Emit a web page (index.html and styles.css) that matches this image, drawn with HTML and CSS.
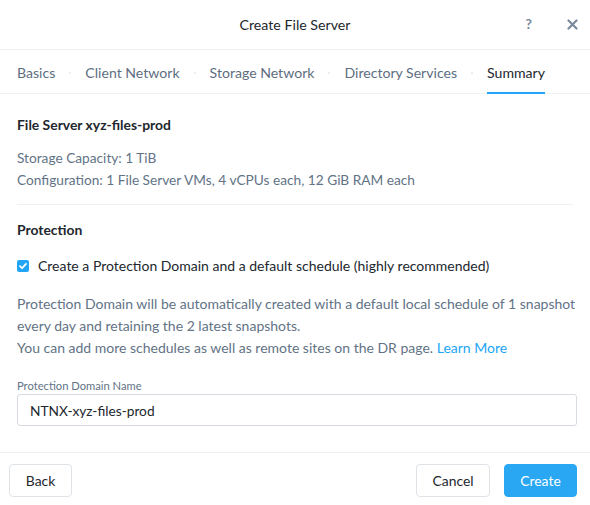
FILE: index.html
```html
<!DOCTYPE html>
<html>
<head>
<meta charset="utf-8">
<link rel="stylesheet" href="styles.css">
</head>
<body>
<div class="modal">
  <div class="header">
    <div class="title">Create File Server</div>
    <div class="header-icons">
      <span class="help">?</span>
      <svg class="close" width="11" height="11" viewBox="0 0 11 11"><path d="M1.5 1.5L9.5 9.5M9.5 1.5L1.5 9.5" stroke="#7b8a9b" stroke-width="2.2" stroke-linecap="round"/></svg>
    </div>
  </div>
  <div class="tabs">
    <span class="tab">Basics</span><span class="dot"></span>
    <span class="tab">Client Network</span><span class="dot"></span>
    <span class="tab">Storage Network</span><span class="dot"></span>
    <span class="tab">Directory Services</span><span class="dot"></span>
    <span class="tab active">Summary</span>
  </div>
  <div class="body">
    <div class="section">
      <div class="heading">File Server xyz-files-prod</div>
      <div class="muted">Storage Capacity: 1 TiB</div>
      <div class="muted">Configuration: 1 File Server VMs, 4 vCPUs each, 12 GiB RAM each</div>
    </div>
    <div class="divider"></div>
    <div class="heading">Protection</div>
    <label class="check">
      <span class="box"><svg width="12" height="12" viewBox="0 0 12 12"><path d="M3 6.2L5.1 8.2L9 3.9" fill="none" stroke="#fff" stroke-width="1.8" stroke-linecap="round" stroke-linejoin="round"/></svg></span>
      <span>Create a Protection Domain and a default schedule (highly recommended)</span>
    </label>
    <p class="desc">Protection Domain will be automatically created with a default local schedule of 1 snapshot every day and retaining the 2 latest snapshots.<br>You can add more schedules as well as remote sites on the DR page. <a class="link">Learn More</a></p>
    <div class="field">
      <div class="field-label">Protection Domain Name</div>
      <div class="input">NTNX-xyz-files-prod</div>
    </div>
  </div>
  <div class="footer">
    <button class="btn back">Back</button>
    <div class="right">
      <button class="btn cancel">Cancel</button>
      <button class="btn primary">Create</button>
    </div>
  </div>
</div>
</body>
</html>
```
FILE: styles.css
```css
* { box-sizing: border-box; }
html, body { margin: 0; padding: 0; background: #fff; }
body {
  font-family: Lato, "Open Sans", sans-serif;
  font-size: 13.7px;
  color: #22272e;
  width: 590px;
  height: 505px;
  overflow: hidden;
}
.modal { width: 590px; height: 505px; display: flex; flex-direction: column; }
.header {
  height: 50px;
  border-bottom: 1px solid #eef0f2;
  display: flex;
  align-items: center;
  justify-content: center;
  position: relative;
}
.title { font-size: 14.2px; color: #22272e; }
.header-icons {
  position: absolute;
  right: 12px;
  top: 16px;
  display: flex;
  align-items: center;
  gap: 35px;
}
.help { color: #7b8a9b; font-weight: 700; font-size: 14px; line-height: 16px; }
.close { display: block; margin-top: 1px; }
.tabs {
  height: 44px;
  border-bottom: 1px solid #eef0f2;
  display: flex;
  align-items: stretch;
  padding-left: 17px;
}
.tab {
  display: flex;
  align-items: center;
  color: #5e6e80;
  font-size: 14.1px;
  padding-top: 3px;
  border-bottom: 2px solid transparent;
  margin-bottom: -1px;
}
.tab.active { color: #22272e; border-bottom-color: #22a5f7; }
.dot {
  width: 2px; height: 2px; background: #e3e6ea;
  align-self: center;
  margin: 3px 14px 0;
  border-radius: 1px;
}
.body { flex: 1; padding: 22px 13px 0 17px; }
.heading { font-weight: 700; color: #22272e; font-size: 13.9px; line-height: 18px; }
.section .heading { margin-bottom: 13px; }
.muted { color: #627386; line-height: 22px; }
.divider { height: 1px; background: #eef0f2; margin: 13px 4px 16px 0; }
.check {
  display: flex;
  align-items: center;
  gap: 9px;
  margin-top: 18px;
  font-size: 14px;
  color: #22272e;
}
.box {
  width: 12px; height: 12px;
  background: #22a5f7;
  border-radius: 2px;
  display: flex;
}
.desc {
  margin: 19px 0 0;
  color: #627386;
  font-size: 14px;
  line-height: 22px;
}
.link { color: #22a5f7; }
.field { margin-top: 20px; }
.field-label { font-size: 11.2px; color: #627386; line-height: 14px; margin-bottom: 1px; }
.input {
  height: 32px;
  border: 1px solid #d6dbe1;
  border-radius: 3px;
  padding: 0 12px;
  display: flex;
  align-items: center;
  color: #22272e;
}
.footer {
  height: 53px;
  border-top: 1px solid #eef0f2;
  display: flex;
  align-items: flex-start;
  justify-content: space-between;
  padding: 11px 13px 0 9px;
}
.right { display: flex; gap: 14px; }
.btn {
  font-family: inherit;
  font-size: 13.9px;
  height: 33px;
  padding: 0 15px;
  background: #fff;
  border: 1px solid #dfe3e8;
  border-radius: 4px;
  color: #22272e;
}
.btn.back { width: 63px; padding: 0; }
.btn.cancel { width: 74px; padding: 0; }
.btn.primary {
  width: 73px;
  padding: 0;
  background: #2aa7f3;
  border-color: #2aa7f3;
  color: #fff;
}
```
